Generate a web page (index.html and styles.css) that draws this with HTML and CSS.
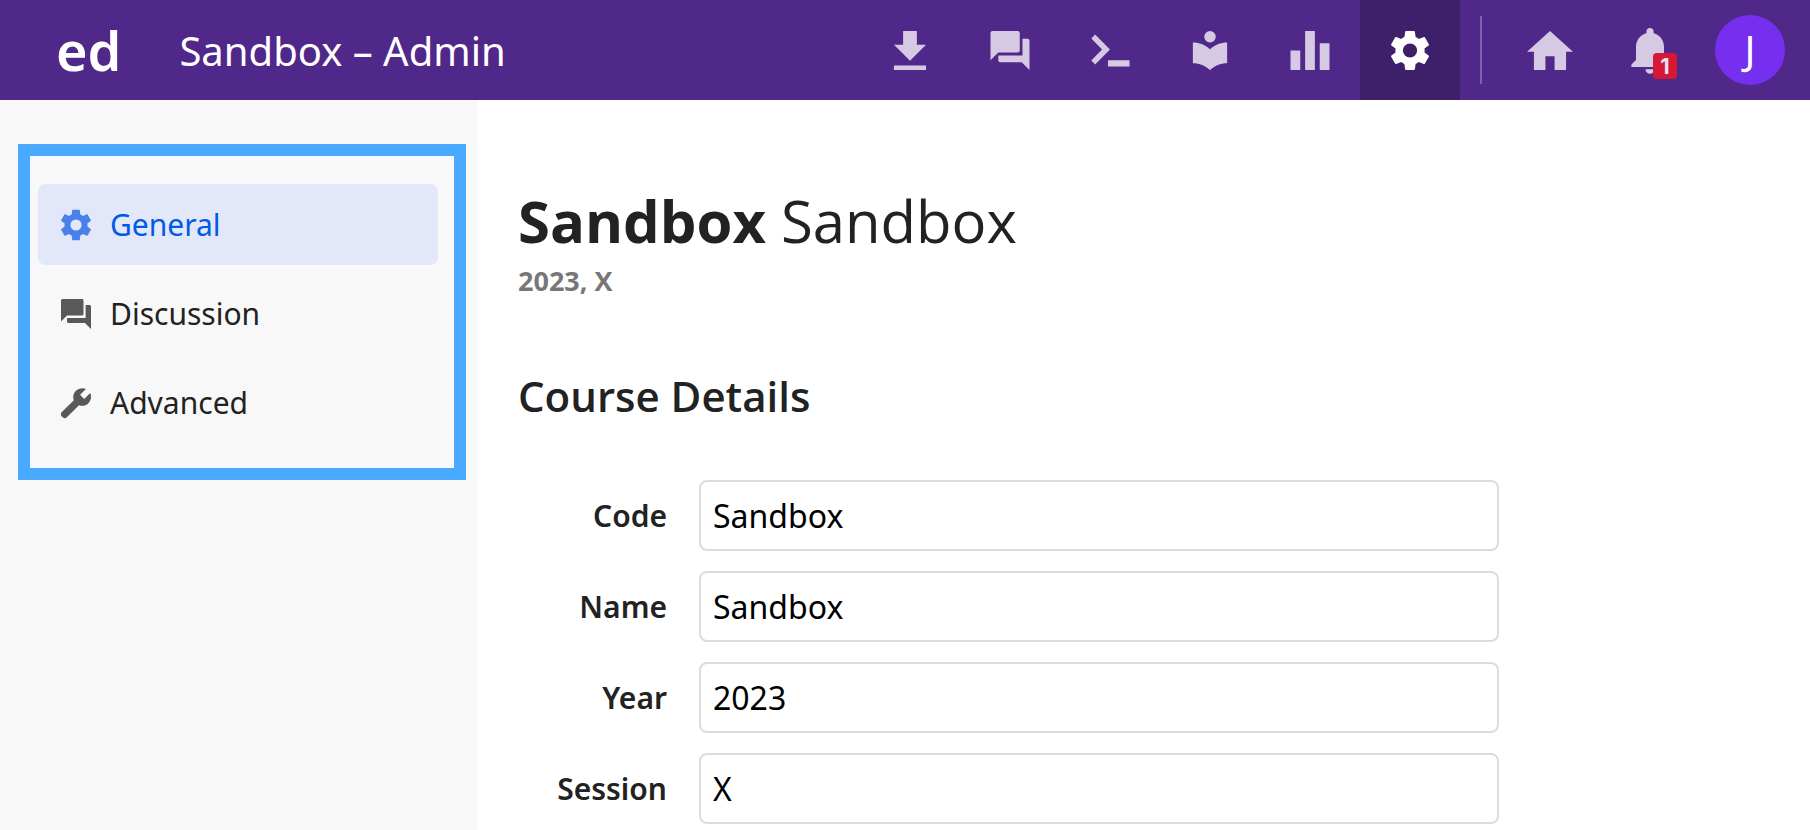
FILE: index.html
```html
<!DOCTYPE html>
<html lang="en">
<head>
<meta charset="utf-8">
<meta name="viewport" content="width=device-width, initial-scale=1">
<title>Sandbox – Admin</title>
<link rel="stylesheet" href="styles.css">
</head>
<body>
<svg class="symbols" aria-hidden="true">
  <symbol id="gear" viewBox="2.6 2.4 18.8 19.2"><path d="M19.14 12.94c.04-.3.06-.61.06-.94 0-.32-.02-.64-.07-.94l2.03-1.58c.18-.14.23-.41.12-.61l-1.92-3.32c-.12-.22-.37-.29-.59-.22l-2.39.96c-.5-.38-1.03-.7-1.62-.94l-.36-2.54c-.04-.24-.24-.41-.48-.41h-3.84c-.24 0-.43.17-.47.41l-.36 2.54c-.59.24-1.13.57-1.62.94l-2.39-.96c-.22-.08-.47 0-.59.22L2.74 8.87c-.12.21-.08.47.12.61l2.03 1.58c-.05.3-.09.63-.09.94s.02.64.07.94l-2.03 1.58c-.18.14-.23.41-.12.61l1.92 3.32c.12.22.37.29.59.22l2.39-.96c.5.38 1.03.7 1.62.94l.36 2.54c.05.24.24.41.48.41h3.84c.24 0 .44-.17.47-.41l.36-2.54c.59-.24 1.13-.56 1.62-.94l2.39.96c.22.08.47 0 .59-.22l1.92-3.32c.12-.22.07-.47-.12-.61l-2.01-1.58zM12 15.5A3.5 3.5 0 1 1 12 8.5A3.5 3.5 0 0 1 12 15.5z"/></symbol>
  <symbol id="forum" viewBox="2 2 20 20"><path d="M21 6h-2.6v8.6H6V17c0 .55.45 1 1 1h11l4 4V7c0-.55-.45-1-1-1zM17 12V3c0-.55-.45-1-1-1H3c-.55 0-1 .45-1 1v14l4-4h10c.55 0 1-.45 1-1z"/></symbol>
</svg>
<header class="topbar">
  <a class="logo" href="#">ed</a>
  <span class="course">Sandbox – Admin</span>
  <nav class="tools" aria-label="Course">
    <a class="tool" href="#" aria-label="Resources"><svg class="icon" viewBox="5 3 14 17"><path d="M19 9h-4V3H9v6H5l7 7zM5 18v2h14v-2z"/></svg></a>
    <a class="tool" href="#" aria-label="Discussion"><svg class="icon"><use href="#forum"/></svg></a>
    <a class="tool" href="#" aria-label="Workspaces"><svg class="icon" viewBox="0 0 38 38"><path d="M4.5 3.300 19 18 4.500 32.700 .8 28.700 11.300 18 .8 7.300zM17 28.500h21V34.500H17z"/></svg></a>
    <a class="tool" href="#" aria-label="Lessons"><svg class="icon" viewBox="3 2 18 20.500"><path d="M12 11.550C9.640 9.350 6.480 8 3 8v11c3.480 0 6.640 1.350 9 3.550 2.360-2.190 5.520-3.550 9-3.550V8c-3.480 0-6.640 1.350-9 3.550zM12 8a3 3 0 1 0 0-6 3 3 0 0 0 0 6z"/></svg></a>
    <a class="tool" href="#" aria-label="Analytics"><svg class="icon" viewBox="0 0 38 38"><path d="M0 19h9.500v19H0zM14.250 0h9.500v38h-9.500zM28.500 12H38v26h-9.500z"/></svg></a>
    <a class="tool active" href="#" aria-label="Admin" aria-current="page"><svg class="icon"><use href="#gear"/></svg></a>
  </nav>
  <nav class="account" aria-label="Account">
    <a class="tool" href="#" aria-label="Home"><svg class="icon home" viewBox="2 3 20 17"><path d="M10 20v-6h4v6h5v-8h3L12 3 2 12h3v8z"/></svg></a>
    <button class="tool" type="button" aria-label="Notifications"><svg class="icon bell" viewBox="0 0 38 46"><path d="M19 0a3.600 3.600 0 0 0-3.600 3.600v1.700C9 7 5 12.400 5 19v13L.4 36.600V39h37.200v-2.400L33 32V19C33 12.400 29 7 22.600 5.300V3.600A3.600 3.600 0 0 0 19 0zM14.500 41.200a4.500 4.500 0 0 0 9 0z"/></svg><span class="badge">1</span></button>
    <button class="avatar" type="button" aria-label="Profile">J</button>
  </nav>
</header>
<div class="layout">
  <aside class="sidebar">
    <nav class="menu" aria-label="Admin sections">
      <a class="menu-item selected" href="#"><svg class="menu-icon"><use href="#gear"/></svg>General</a>
      <a class="menu-item" href="#"><svg class="menu-icon"><use href="#forum"/></svg>Discussion</a>
      <a class="menu-item" href="#"><svg class="menu-icon" viewBox="1 1 22 22"><path transform="translate(24 0) scale(-1 1)" d="M22.700 19l-9.100-9.100c.9-2.300.4-5-1.500-6.900-2-2-5-2.400-7.400-1.300L9 6 6 9 1.600 4.700C.4 7.100.9 10.100 2.900 12.100c1.900 1.900 4.600 2.400 6.900 1.500l9.100 9.100a2 2 0 0 0 2.600 0l1.200-1.200a2 2 0 0 0 0-2.500z"/></svg>Advanced</a>
    </nav>
  </aside>
  <main class="content">
    <h1 class="title"><strong>Sandbox</strong> Sandbox</h1>
    <p class="term">2023, X</p>
    <h2 class="section-title">Course Details</h2>
    <form class="details">
      <label for="code">Code</label><input id="code" type="text" value="Sandbox">
      <label for="name">Name</label><input id="name" type="text" value="Sandbox">
      <label for="year">Year</label><input id="year" type="text" value="2023">
      <label for="session">Session</label><input id="session" type="text" value="X">
    </form>
  </main>
</div>
</body>
</html>
```
FILE: styles.css
```css
* { box-sizing: border-box; }
body {
  margin: 0;
  min-height: 100vh;
  display: flex;
  flex-direction: column;
  background: #fff;
  color: #222;
  font-family: "Noto Sans", "Open Sans", sans-serif;
}
a { color: inherit; text-decoration: none; }
button { border: 0; padding: 0; background: none; color: inherit; font: inherit; }
.symbols { position: absolute; width: 0; height: 0; }

.topbar {
  display: flex;
  align-items: center;
  height: 100px;
  padding: 0 25px 0 56px;
  background: #50288a;
  color: #fff;
}
.logo { font-size: 54px; font-weight: 600; line-height: 64px; }
.course { margin-left: 58px; padding-top: 2px; font-size: 40px; line-height: 56px; white-space: nowrap; }
.tools { display: flex; margin-left: auto; }
.tool {
  position: relative;
  display: flex;
  align-items: center;
  justify-content: center;
  width: 100px;
  height: 100px;
  padding-top: 1px;
  color: #d5c9e4;
}
.tool.active { background: #3e1f69; color: #fff; }
.icon { width: 46px; height: 39px; fill: currentColor; }
.bell { height: 46px; }
.account { display: flex; align-items: center; margin-left: 20px; }
.account::before {
  content: "";
  width: 2px;
  height: 68px;
  margin-right: 18px;
  background: #8160ae;
}
.badge {
  position: absolute;
  left: 53px;
  top: 53px;
  width: 24px;
  height: 26px;
  border-radius: 4px;
  background: #d41835;
  color: #eedfed;
  font: bold 22px/26px Inter, "Liberation Sans", sans-serif;
  text-align: center;
}
.avatar {
  width: 70px;
  height: 70px;
  margin-left: 15px;
  border-radius: 50%;
  background: #762fee;
  color: #fff;
  font-size: 40px;
  line-height: 70px;
}

.layout { display: flex; flex: 1; }
.sidebar { flex: 0 0 478px; padding: 44px 12px 44px 18px; background: #f8f8f8; }
.menu {
  display: flex;
  flex-direction: column;
  gap: 8px;
  padding: 28px 16px 25px 8px;
  border: 12px solid #48a9ff;
}
.menu-item {
  display: flex;
  align-items: center;
  gap: 19px;
  padding: 20px 23px;
  border-radius: 8px;
  font-size: 30px;
  line-height: 41px;
}
.menu-item.selected { background: #e2e8fa; color: #005ae6; }
.menu-icon { width: 30px; height: 32px; fill: #595959; }
.selected .menu-icon { fill: #4a80ea; }

.content { flex: 1; padding: 80px 40px 0; }
.title, .term, .section-title { font-family: "Open Sans", "Noto Sans", sans-serif; }
.title { margin: 0; font-size: 58px; line-height: 82px; font-weight: 400; }
.title strong { font-weight: 700; }
.term { margin: 0; color: #777; font-size: 27px; line-height: 38px; font-weight: 700; }
.section-title { margin: 70px 0 58px; font-size: 42px; line-height: 52px; font-weight: 600; }
.details {
  display: grid;
  grid-template-columns: 149px minmax(200px, 800px);
  column-gap: 32px;
  row-gap: 20px;
  align-items: center;
}
.details label { text-align: right; font-size: 30px; line-height: 40px; font-weight: 600; }
.details input {
  width: 100%;
  height: 71px;
  padding: 0 12px;
  border: 2px solid #dcdcdc;
  border-radius: 8px;
  background: #fff;
  color: #000;
  font: 32px/44px "Noto Sans", "Open Sans", sans-serif;
}
```
